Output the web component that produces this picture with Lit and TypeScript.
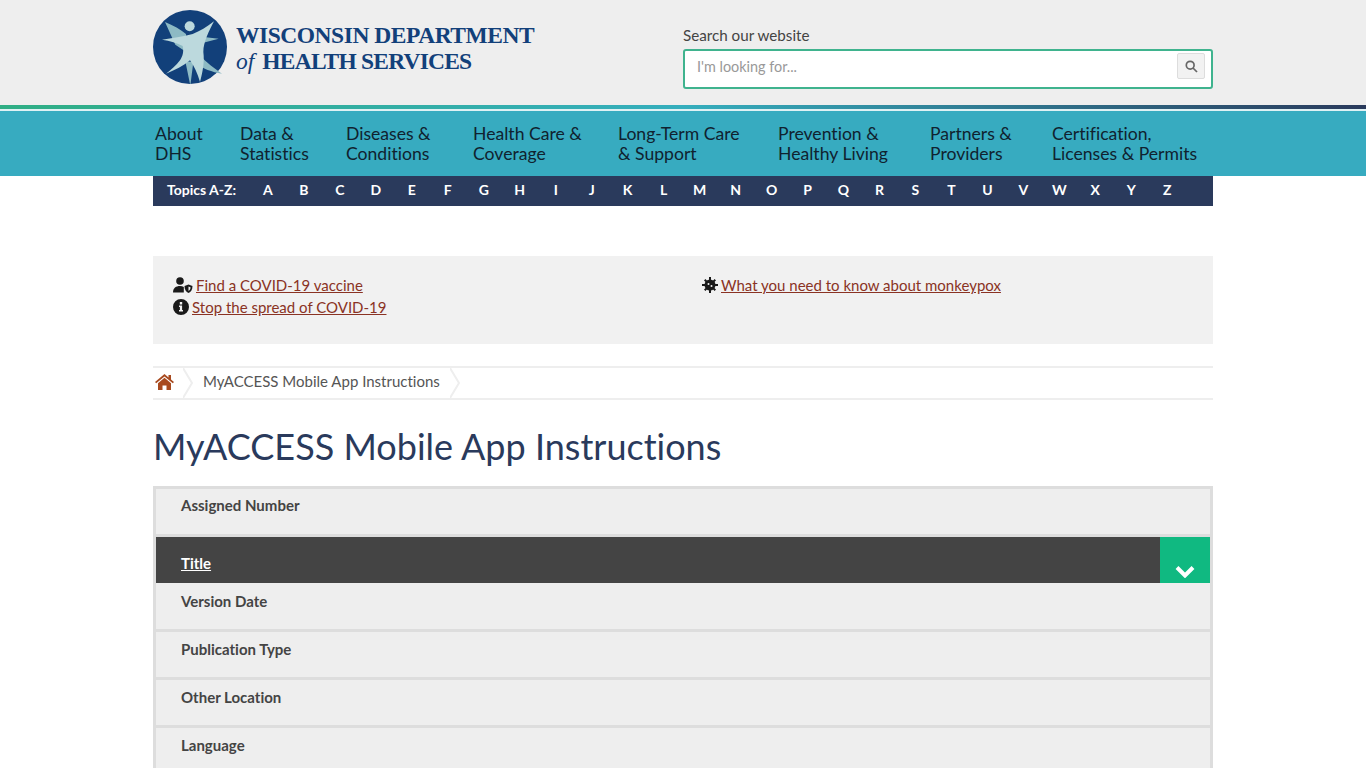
import { LitElement, html, css, svg } from 'lit';
import { customElement } from 'lit/decorators.js';

const NAV = [
  ['About', 'DHS'],
  ['Data &', 'Statistics'],
  ['Diseases &', 'Conditions'],
  ['Health Care &', 'Coverage'],
  ['Long-Term Care', '& Support'],
  ['Prevention &', 'Healthy Living'],
  ['Partners &', 'Providers'],
  ['Certification,', 'Licenses & Permits'],
];

const LETTERS = 'ABCDEFGHIJKLMNOPQRSTUVWXYZ'.split('');

const logo = svg`
  <circle cx="120" cy="125" r="111" fill="#12407a"/>
  <path fill="#8dbac4" d="M45 50C70 60 92 73 108 86L112 142L76 118ZM155 94L206 100L160 112ZM148 148C170 172 195 190 216 205C186 200 158 190 136 172ZM106 168L121 241L130 170Z"/>
  <circle cx="119" cy="63" r="15" fill="#bcd9dd"/>
  <path fill="#bcd9dd" d="M192 48C170 65 150 78 128 86C100 94 65 98 36 103C60 107 82 112 98 122C102 140 98 152 90 165C78 180 65 193 48 205C75 194 100 182 120 165C132 182 143 205 150 230C158 200 164 170 160 140C160 110 178 75 192 48Z"/>
`;

@customElement('app-root')
export class AppRoot extends LitElement {
  static styles = css`
    :host {
      display: block;
      font-family: 'Lato', sans-serif;
      font-variant-ligatures: none;
      color: #444;
      background: #fff;
      height: 768px;
      overflow: hidden;
    }

    .wrap {
      width: 1060px;
      margin: 0 auto;
    }

    .header {
      background: #eee;
      height: 105px;
    }

    .header__inner {
      display: flex;
      justify-content: space-between;
    }

    .logo {
      display: flex;
      gap: 9px;
      padding-top: 10px;
      color: #12407a;
      font-family: 'Liberation Serif', serif;
      font-weight: 700;
    }

    .logo svg {
      width: 74px;
      height: 74px;
    }

    .logo__text {
      padding-top: 12px;
      font-size: 23.5px;
      line-height: 26px;
      white-space: nowrap;
    }

    .logo__line1 {
      letter-spacing: -0.47px;
    }

    .logo__line2 {
      letter-spacing: -0.8px;
    }

    .logo__of {
      font-style: italic;
      font-weight: 400;
      letter-spacing: 0;
      margin-right: 3px;
    }

    .search {
      width: 530px;
      padding-top: 26px;
    }

    .search__label {
      font-size: 15.2px;
      line-height: 18px;
      color: #444;
      margin-bottom: 5px;
    }

    .search__box {
      height: 40px;
      box-sizing: border-box;
      border: 2px solid #3fb38e;
      border-radius: 3px;
      background: #fff;
      display: flex;
      align-items: center;
      justify-content: space-between;
      padding: 0 6px 6px 12px;
    }

    .search__placeholder {
      font-size: 14.4px;
      color: #999;
      padding-top: 1px;
    }

    .search__btn {
      width: 28px;
      height: 26px;
      box-sizing: border-box;
      background: #f2f2f2;
      border: 1px solid #ddd;
      border-radius: 2px;
      display: flex;
      align-items: center;
      justify-content: center;
    }

    .stripe {
      height: 4px;
      background: linear-gradient(90deg, #2fae84 0%, #35aebd 50%, #2a3a5c 100%);
    }

    .stripe-gap {
      height: 2px;
      background: #dff1f4;
    }

    .nav {
      background: #37abc0;
      height: 65px;
    }

    .nav__inner {
      display: grid;
      grid-template-columns: 85px 106px 127px 145px 160px 152px 122px auto;
      padding: 13px 0 0 2px;
      box-sizing: border-box;
    }

    .nav__item {
      font-size: 17.6px;
      line-height: 20px;
      color: #10222f;
      white-space: nowrap;
    }

    .az {
      height: 30px;
      background: #2a3a5c;
      color: #fff;
      display: flex;
      align-items: center;
      font-weight: 700;
      font-size: 14px;
      padding-bottom: 3px;
      box-sizing: border-box;
    }

    .az__label {
      width: 97px;
      box-sizing: border-box;
      padding-left: 14px;
      white-space: nowrap;
    }

    .az__letter {
      width: 35.98px;
      text-align: center;
      flex: none;
    }

    .alerts {
      margin-top: 50px;
      height: 88px;
      box-sizing: border-box;
      background: #f1f1f1;
      padding: 18px 20px 0;
      display: grid;
      grid-template-columns: 529px 1fr;
      font-size: 15px;
      line-height: 22px;
    }

    .alerts a {
      color: #8a3324;
      text-decoration: underline;
    }

    .alerts__row {
      display: flex;
      align-items: center;
      gap: 3px;
    }

    .alerts svg {
      width: 16px;
      height: 16px;
      flex: none;
      fill: #1a1a1a;
    }

    .alerts__row svg.wide {
      width: 20px;
    }

    .crumbs {
      margin-top: 22px;
      height: 34px;
      box-sizing: border-box;
      border-top: 2px solid #eee;
      border-bottom: 2px solid #eee;
      display: flex;
      align-items: center;
      font-size: 15px;
      color: #555;
    }

    .crumbs__home {
      width: 30px;
      padding: 0 0 2px 2px;
      box-sizing: border-box;
      display: flex;
    }

    .crumbs__sep {
      width: 10px;
      height: 30px;
      flex: none;
    }

    .crumbs__text {
      padding: 0 10px 5px 10px;
    }

    h1 {
      margin: 24px 0 18px;
      font-size: 36px;
      line-height: 44px;
      font-weight: 400;
      color: #2a3a5c;
    }

    .table {
      border-left: 3px solid #ddd;
      border-right: 3px solid #ddd;
      border-top: 3px solid #ddd;
    }

    .row {
      height: 48px;
      box-sizing: border-box;
      background: #eee;
      border-bottom: 3px solid #ddd;
      padding: 8px 0 0 25px;
      font-size: 15px;
      line-height: 18px;
      font-weight: 700;
      color: #444;
    }

    .row--first {
      padding-top: 7px;
    }

    .row--after-active {
      height: 49px;
      padding-top: 9px;
    }

    .row--active {
      height: 46px;
      background: #444;
      border-bottom: 0;
      color: #fff;
      padding: 17px 0 0 25px;
      position: relative;
    }

    .row--active span {
      text-decoration: underline;
    }

    .row__toggle {
      position: absolute;
      right: 0;
      top: 0;
      width: 50px;
      height: 46px;
      background: #10b981;
      display: flex;
      align-items: flex-end;
      justify-content: center;
      padding-bottom: 5px;
      box-sizing: border-box;
    }
  `;

  render() {
    return html`
      <div class="header">
        <div class="wrap header__inner">
          <div class="logo">
            <svg viewBox="9 14 222 222">${logo}</svg>
            <div class="logo__text">
              <div class="logo__line1">WISCONSIN DEPARTMENT</div>
              <div class="logo__line2"><span class="logo__of">of</span> HEALTH SERVICES</div>
            </div>
          </div>
          <div class="search">
            <div class="search__label">Search our website</div>
            <div class="search__box">
              <span class="search__placeholder">I'm looking for...</span>
              <span class="search__btn">
                <svg width="13" height="13" viewBox="0 0 13 13" fill="none" stroke="#666" stroke-width="1.7">
                  <circle cx="5.2" cy="5.2" r="3.9"/>
                  <path d="M8 8l4 4"/>
                </svg>
              </span>
            </div>
          </div>
        </div>
      </div>
      <div class="stripe"></div>
      <div class="stripe-gap"></div>
      <div class="nav">
        <div class="wrap nav__inner">
          ${NAV.map((n) => html`<div class="nav__item">${n[0]}<br />${n[1]}</div>`)}
        </div>
      </div>
      <div class="wrap">
        <div class="az">
          <div class="az__label">Topics A-Z:</div>
          ${LETTERS.map((l) => html`<div class="az__letter">${l}</div>`)}
        </div>
        <div class="alerts">
          <div>
            <div class="alerts__row">
              <svg class="wide" viewBox="0 0 20 16">
                <circle cx="7" cy="4" r="3.8"/>
                <path d="M0 15.5C0 11 3 9 7 9c1.5 0 2.8.3 3.8.9V15.5z"/>
                <path d="M15.5 7.5l4 1.4c0 3.5-1.5 6-4 7-2.5-1-4-3.500-4-7z"/>
                <path fill="#f1f1f1" d="M15.500 9.500l2 .7c0 1.800-.7 3-2 3.700z"/>
              </svg>
              <a>Find a COVID-19 vaccine</a>
            </div>
            <div class="alerts__row">
              <svg viewBox="0 0 16 16">
                <path fill-rule="evenodd" d="M8 0a8 8 0 1 1 0 16A8 8 0 0 1 8 0zM6.800 3v2.400h2.400V3zM6 6.600v1.500h.9v3H6v1.500h4v-1.500h-.9V6.600z"/>
              </svg>
              <a>Stop the spread of COVID-19</a>
            </div>
          </div>
          <div>
            <div class="alerts__row">
              <svg viewBox="0 0 16 16">
                <circle cx="8" cy="8" r="5.500"/>
                <path d="M7 0h2v3H7zM7 13h2v3H7zM0 7h3v2H0zM13 7h3v2h-3zM2 3.400L3.400 2l2.400 2.400L4.400 5.800zM10.200 11.600l1.400-1.400L14 12.600 12.600 14zM12.600 2L14 3.400l-2.400 2.400-1.400-1.400zM4.400 10.200l1.400 1.400L3.400 14 2 12.600z"/>
                <circle cx="6.500" cy="7" r="1" fill="#f1f1f1"/>
                <circle cx="9.500" cy="9" r="1" fill="#f1f1f1"/>
              </svg>
              <a>What you need to know about monkeypox</a>
            </div>
          </div>
        </div>
        <div class="crumbs">
          <span class="crumbs__home">
            <svg width="19" height="16" viewBox="0 0 19 16" fill="#a84a1f">
              <path d="M9.500 0L0 8l1.200 1.300L9.500 2.400l8.300 6.900L19 8l-3-2.500V1h-2.500v2.400z"/>
              <path d="M9.500 3.800L3 9.200V16h4.500v-4.500h4V16H16V9.200z"/>
            </svg>
          </span>
          <svg class="crumbs__sep" viewBox="0 0 10 30" fill="none" stroke="#eee" stroke-width="2">
            <path d="M0 0l9 15L0 30"/>
          </svg>
          <span class="crumbs__text">MyACCESS Mobile App Instructions</span>
          <svg class="crumbs__sep" viewBox="0 0 10 30" fill="none" stroke="#eee" stroke-width="2">
            <path d="M0 0l9 15L0 30"/>
          </svg>
        </div>
        <h1>MyACCESS Mobile App Instructions</h1>
        <div class="table">
          <div class="row row--first">Assigned Number</div>
          <div class="row row--active">
            <span>Title</span>
            <div class="row__toggle">
              <svg width="20" height="13" viewBox="0 0 20 13" fill="none" stroke="#fff" stroke-width="4">
                <path d="M2 2.500l8 8 8-8"/>
              </svg>
            </div>
          </div>
          <div class="row row--after-active">Version Date</div>
          <div class="row">Publication Type</div>
          <div class="row">Other Location</div>
          <div class="row">Language</div>
        </div>
      </div>
    `;
  }
}
